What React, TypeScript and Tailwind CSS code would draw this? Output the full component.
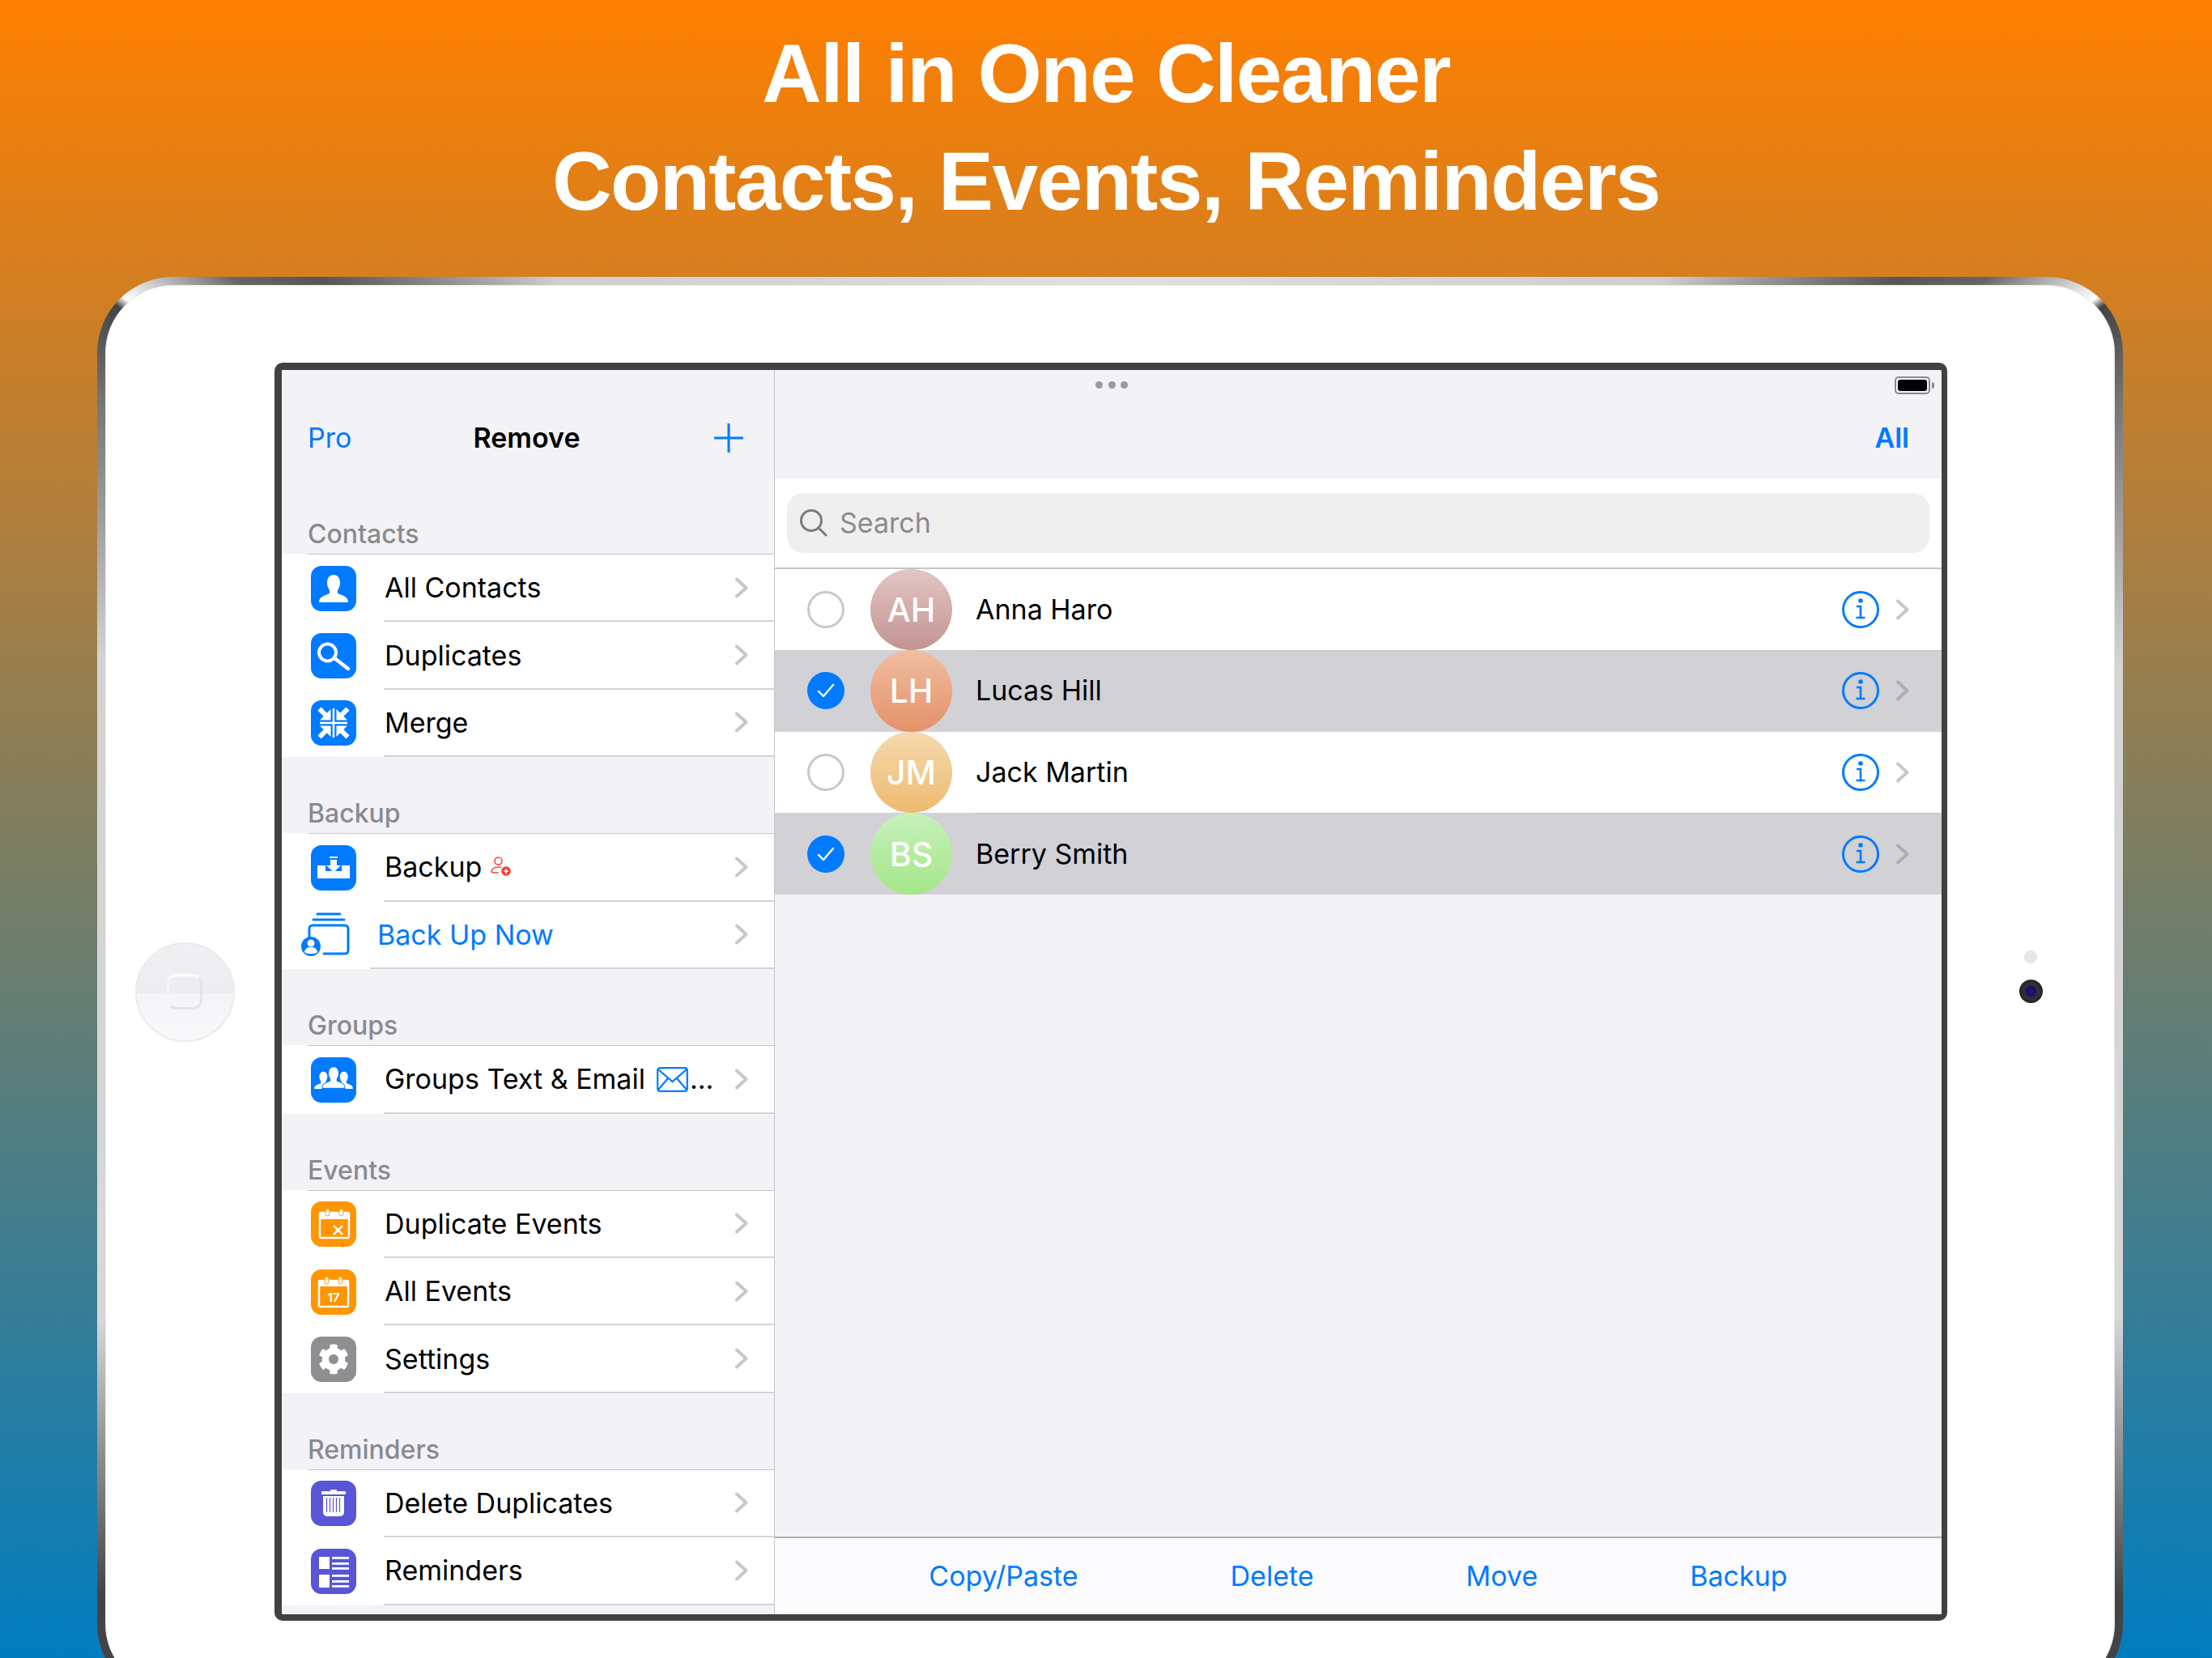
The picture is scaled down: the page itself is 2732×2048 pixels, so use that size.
import { FaCog } from "react-icons/fa";

type RowData = {
  label: string;
  icon: React.ReactNode;
  color?: string;
  extra?: React.ReactNode;
};

const bustPath = "M10 45c0-5 3-7 8-9l5-2v-4c-2-3-3-6-3-9 0-6 3-10 8-10s8 4 8 10c0 3-1 6-3 9v4l5 2c5 2 8 4 8 9z";

function Chevron({ dark }: { dark?: boolean }) {
  return (
    <svg width="16" height="26" viewBox="0 0 16 26" fill="none" className="shrink-0">
      <polyline
        points="2,2.5 13.5,13 2,23.5"
        stroke={dark ? "#aeaeb2" : "#c7c7cc"}
        strokeWidth="4"
        strokeLinecap="round"
        strokeLinejoin="round"
      />
    </svg>
  );
}

function Tile({ bg, children }: { bg: string; children: React.ReactNode }) {
  return (
    <div className={`w-[56px] h-[56px] rounded-[13px] flex items-center justify-center ${bg}`}>
      <svg width="56" height="56" viewBox="0 0 56 56" fill="white">
        {children}
      </svg>
    </div>
  );
}

const PersonIcon = (
  <Tile bg="bg-[#007aff]">
    <path d={bustPath} />
  </Tile>
);

const SearchIcon = (
  <Tile bg="bg-[#007aff]">
    <circle cx="20.5" cy="24" r="10.5" fill="none" stroke="white" strokeWidth="4" />
    <line x1="29" y1="31" x2="46" y2="44" stroke="white" strokeWidth="4.5" strokeLinecap="round" />
  </Tile>
);

const MergeIcon = (
  <Tile bg="bg-[#007aff]">
    <line x1="11" y1="28" x2="45" y2="28" stroke="white" strokeWidth="2.5" />
    <line x1="28" y1="10" x2="28" y2="46" stroke="white" strokeWidth="2.5" />
    <polygon points="24.5,24.5 24.5,11 11,24.5" />
    <polygon points="31.5,24.5 31.5,11 45,24.5" />
    <polygon points="24.5,31.5 24.5,45 11,31.5" />
    <polygon points="31.5,31.5 31.5,45 45,31.5" />
    <line x1="19" y1="19" x2="10.5" y2="10.5" stroke="white" strokeWidth="6" />
    <line x1="37" y1="19" x2="45.5" y2="10.5" stroke="white" strokeWidth="6" />
    <line x1="19" y1="37" x2="10.5" y2="45.5" stroke="white" strokeWidth="6" />
    <line x1="37" y1="37" x2="45.5" y2="45.5" stroke="white" strokeWidth="6" />
  </Tile>
);

const BackupIcon = (
  <Tile bg="bg-[#007aff]">
    <path d="M8 25h10v7h20v-7h10v16H8z" />
    <rect x="23" y="14" width="10" height="2" />
    <rect x="24" y="18" width="8" height="8" />
    <polygon points="19,25 37,25 28,33.5" />
  </Tile>
);

const BackUpNowIcon = (
  <svg width="60" height="56" viewBox="0 0 60 56" fill="none" stroke="#007aff" strokeWidth="3">
    <line x1="20" y1="2" x2="48" y2="2" strokeLinecap="round" />
    <line x1="15" y1="9" x2="53" y2="9" strokeLinecap="round" />
    <path d="M10 36V20a4 4 0 0 1 4-4h40a4 4 0 0 1 4 4v27a4 4 0 0 1-4 4H28" strokeLinecap="round" />
    <circle cx="12" cy="42" r="12" fill="#007aff" stroke="none" />
    <circle cx="12" cy="38" r="4.5" fill="white" stroke="none" />
    <path d="M4 49c1-5 4-6 8-6s7 1 8 6c-2 3-14 3-16 0z" fill="white" stroke="none" />
  </svg>
);

const GroupIcon = (
  <Tile bg="bg-[#007aff]">
    <g transform="translate(-2 11) scale(0.62)">
      <path d={bustPath} />
    </g>
    <g transform="translate(23.4 11) scale(0.62)">
      <path d={bustPath} />
    </g>
    <g transform="translate(7 4) scale(0.75)">
      <path d={bustPath} stroke="#007aff" strokeWidth="3" paintOrder="stroke" />
    </g>
  </Tile>
);

const EventXIcon = (
  <Tile bg="bg-[#ff9500]">
    <rect x="11" y="14" width="36" height="31" fill="none" stroke="white" strokeWidth="2.5" rx="1.5" />
    <rect x="10" y="13" width="38" height="9" rx="2" />
    <rect x="18" y="9" width="5" height="9" rx="2.5" stroke="#ff9500" strokeWidth="1" />
    <rect x="35" y="9" width="5" height="9" rx="2.5" stroke="#ff9500" strokeWidth="1" />
    <path d="M28 30l11 11M39 30L28 41" stroke="white" strokeWidth="2.5" />
  </Tile>
);

const EventIcon = (
  <Tile bg="bg-[#ff9500]">
    <rect x="10" y="14" width="36" height="32" fill="none" stroke="white" strokeWidth="2.5" rx="1.5" />
    <rect x="9" y="13" width="38" height="8" rx="2" />
    <rect x="17" y="9" width="5" height="9" rx="2.5" stroke="#ff9500" strokeWidth="1" />
    <rect x="34" y="9" width="5" height="9" rx="2.5" stroke="#ff9500" strokeWidth="1" />
    <text x="28" y="40" textAnchor="middle" fontSize="15" fontWeight="700" fontFamily="Inter, sans-serif" fill="white">
      17
    </text>
  </Tile>
);

const SettingsIcon = (
  <div className="w-[56px] h-[56px] rounded-[13px] bg-[#8e8e93] flex items-center justify-center">
    <FaCog size={38} color="white" />
  </div>
);

const TrashIcon = (
  <Tile bg="bg-[#5856d6]">
    <rect x="13" y="13" width="30" height="4" rx="1" />
    <rect x="24" y="11" width="8" height="3" rx="1" />
    <path d="M15 19h26v20a5 5 0 0 1-5 5H20a5 5 0 0 1-5-5z" />
    <path d="M19.5 21v18M23.5 21v18M27.5 21v18M31.5 21v18M35.5 21v18" stroke="#5856d6" strokeWidth="1.2" />
  </Tile>
);

const ReminderIcon = (
  <Tile bg="bg-[#5856d6]">
    <rect x="10" y="10" width="13" height="15" />
    <rect x="10" y="32" width="13" height="16" />
    <rect x="26" y="10" width="21" height="2.8" />
    <rect x="26" y="17" width="21" height="2.8" />
    <rect x="26" y="23" width="21" height="2.8" />
    <rect x="26" y="32" width="21" height="2.8" />
    <rect x="26" y="39" width="21" height="2.8" />
    <rect x="26" y="45" width="21" height="2.8" />
  </Tile>
);

const RedPersonAdd = (
  <svg width="25" height="24" viewBox="0 0 25 24" fill="none" stroke="#ff3b30" strokeWidth="1.5" className="ml-[11px] mb-[3px]">
    <circle cx="9.5" cy="5.5" r="4.5" />
    <path d="M1 19c0-4 4-6 8.5-6 1 0 2 .1 3 .4M1 19c1 1 5 1 8 1" strokeLinecap="round" />
    <circle cx="19" cy="18" r="5.8" fill="#ff3b30" stroke="none" />
    <path d="M19 15v6M16 18h6" stroke="white" strokeWidth="1.6" />
  </svg>
);

const MailIcon = (
  <svg width="39" height="31" viewBox="0 0 39 31" fill="none" stroke="#007aff" strokeWidth="2.2" className="ml-[14px]">
    <rect x="1.2" y="1.2" width="36.6" height="28.6" rx="3" />
    <path d="M2 3l17.5 15L37 3M2 28l12-14M37 28L25 14" />
  </svg>
);

const sections: { title: string; headH: string; rows: RowData[] }[] = [
  {
    title: "Contacts",
    headH: "h-[93px]",
    rows: [
      { label: "All Contacts", icon: PersonIcon },
      { label: "Duplicates", icon: SearchIcon },
      { label: "Merge", icon: MergeIcon },
    ],
  },
  {
    title: "Backup",
    headH: "h-[94px]",
    rows: [{ label: "Backup", icon: BackupIcon, extra: RedPersonAdd }],
  },
  {
    title: "Groups",
    headH: "h-[94px]",
    rows: [
      {
        label: "Groups Text & Email",
        icon: GroupIcon,
        extra: (
          <>
            {MailIcon}
            <span className="ml-[2px]">...</span>
          </>
        ),
      },
    ],
  },
  {
    title: "Events",
    headH: "h-[94px]",
    rows: [
      { label: "Duplicate Events", icon: EventXIcon },
      { label: "All Events", icon: EventIcon },
      { label: "Settings", icon: SettingsIcon },
    ],
  },
  {
    title: "Reminders",
    headH: "h-[94px]",
    rows: [
      { label: "Delete Duplicates", icon: TrashIcon },
      { label: "Reminders", icon: ReminderIcon },
    ],
  },
];

const contacts = [
  { initials: "AH", name: "Anna Haro", selected: false, grad: "from-[#e3c6c4] to-[#c29491]" },
  { initials: "LH", name: "Lucas Hill", selected: true, grad: "from-[#f1bea1] to-[#e39168]" },
  { initials: "JM", name: "Jack Martin", selected: false, grad: "from-[#f5d9ae] to-[#eebb6e]" },
  { initials: "BS", name: "Berry Smith", selected: true, grad: "from-[#c8f1ba] to-[#a3e688]" },
];

function SideRow({ row }: { row: RowData }) {
  return (
    <div className="h-[83.4px] flex bg-white">
      <div className="w-[126px] pl-[36px] flex items-center shrink-0">{row.icon}</div>
      <div className="flex-1 flex items-center justify-between pl-[1px] pr-[32px] border-b-2 border-[#d4d4d8]">
        <div className="flex items-center pt-[1px]">
          <span>{row.label}</span>
          {row.extra}
        </div>
        <Chevron />
      </div>
    </div>
  );
}

function BackUpNowRow() {
  return (
    <div className="h-[83.6px] flex bg-white">
      <div className="w-[109px] pl-[24px] flex items-center shrink-0">{BackUpNowIcon}</div>
      <div className="flex-1 flex items-center justify-between pl-[9px] pr-[32px] border-b-2 border-[#d4d4d8] text-[#007aff]">
        <span className="pt-[1px]">Back Up Now</span>
        <Chevron />
      </div>
    </div>
  );
}

function Sidebar() {
  return (
    <aside className="w-[609px] shrink-0 border-r border-[#c6c6c8] flex flex-col">
      <div className="h-[134px] pt-[40px] pb-[6px] pl-[32px] pr-[38px] grid grid-cols-[1fr_auto_1fr] items-center">
        <span className="text-[#007aff]">Pro</span>
        <span className="font-semibold ml-[3px]">Remove</span>
        <svg width="36" height="36" viewBox="0 0 36 36" stroke="#007aff" strokeWidth="3" className="justify-self-end">
          <line x1="18" y1="0" x2="18" y2="36" />
          <line x1="0" y1="18" x2="36" y2="18" />
        </svg>
      </div>
      {sections.map((s) => (
        <section key={s.title}>
          <div className={`${s.headH} flex items-end pl-[32px] pb-[4px]`}>
            <span className="text-[32px] leading-[40px] font-medium text-[#8a8a8e]">{s.title}</span>
          </div>
          <div className="bg-white">
            <div className="h-px ml-[32px] bg-[#c6c6c8]" />
            {s.rows.map((r) => (
              <SideRow key={r.label} row={r} />
            ))}
            {s.title === "Backup" && <BackUpNowRow />}
          </div>
        </section>
      ))}
    </aside>
  );
}

function InfoIcon() {
  return (
    <svg width="46" height="46" viewBox="0 0 46 46" fill="none" stroke="#007aff" strokeWidth="3" className="shrink-0">
      <circle cx="23" cy="23" r="21.5" />
      <circle cx="23" cy="12" r="2.8" fill="#007aff" stroke="none" />
      <path d="M18 19h5v14M17.5 33h11" strokeWidth="2.6" />
    </svg>
  );
}

function ContactRow({ c }: { c: (typeof contacts)[number] }) {
  return (
    <div className={`h-[100.6px] flex items-center pl-[40px] ${c.selected ? "bg-[#d1d1d6]" : "bg-white"}`}>
      {c.selected ? (
        <div className="w-[46px] h-[46px] rounded-full bg-[#007aff] flex items-center justify-center shrink-0">
          <svg width="24" height="20" viewBox="0 0 24 20" fill="none" stroke="white" strokeWidth="2.4">
            <path d="M3 11l6 6L21 3" strokeLinecap="round" strokeLinejoin="round" />
          </svg>
        </div>
      ) : (
        <div className="w-[46px] h-[46px] rounded-full border-[3px] border-[#c7c7cc] shrink-0" />
      )}
      <div
        className={`ml-[32px] w-[101px] h-[100.6px] rounded-full bg-gradient-to-b ${c.grad} flex items-center justify-center shrink-0 text-white text-[41px] font-medium`}
      >
        {c.initials}
      </div>
      <div className={`ml-[28px] flex-1 self-stretch flex items-center pl-[1px] pr-[40px] pb-[2px] border-t-2 ${c.selected ? "border-[#c8c8cc]" : "border-transparent"}`}>
        <span className="flex-1">{c.name}</span>
        <InfoIcon />
        <div className="ml-[21px]">
          <Chevron dark={c.selected} />
        </div>
      </div>
    </div>
  );
}

function MainPane() {
  return (
    <main className="flex-1 flex flex-col">
      <div className="h-[134px] pt-[40px] pb-[6px] pr-[40px] flex items-center justify-end">
        <span className="text-[#007aff] font-semibold">All</span>
      </div>
      <div className="h-[111.5px] px-[15px] pt-[18px] bg-white border-b-2 border-[#c6c6c8]">
        <div className="h-[74px] rounded-[20px] bg-[#efeff0] flex items-center pl-[15px] gap-[14px] text-[#8a8a8e]">
          <svg width="36" height="36" viewBox="0 0 36 36" fill="none" stroke="#7c7c80" strokeWidth="3">
            <circle cx="15" cy="15" r="12.5" />
            <line x1="24" y1="24" x2="33" y2="33" strokeLinecap="round" />
          </svg>
          <span>Search</span>
        </div>
      </div>
      {contacts.map((c) => (
        <ContactRow key={c.name} c={c} />
      ))}
      <div className="mt-auto h-[96px] border-t-2 border-[#b0b0b3] bg-[#fbfbfd] flex items-center justify-center gap-[188px] text-[#007aff]">
        <span>Copy/Paste</span>
        <span>Delete</span>
        <span>Move</span>
        <span>Backup</span>
      </div>
    </main>
  );
}

function Screen() {
  return (
    <div className="relative w-[2066px] h-[1554px] shrink-0 border-t-[9px] border-l-[9px] border-r-[7px] border-b-[8px] border-[#414141] rounded-[10px] bg-[#f2f2f7] flex text-[34px] leading-[44px] text-black font-['Inter',sans-serif]">
      <Sidebar />
      <MainPane />
      <div className="absolute left-1/2 -translate-x-1/2 top-[14px] flex gap-[6.5px]">
        <div className="w-[9px] h-[9px] rounded-full bg-[#9a9a9f]" />
        <div className="w-[9px] h-[9px] rounded-full bg-[#9a9a9f]" />
        <div className="w-[9px] h-[9px] rounded-full bg-[#9a9a9f]" />
      </div>
      <div className="absolute top-[8px] right-[9px] flex items-center">
        <div className="w-[44px] h-[22px] rounded-[5px] border-2 border-[#8a8a8e] p-[2px]">
          <div className="w-full h-full rounded-[3px] bg-black" />
        </div>
        <div className="w-[3px] h-[8px] ml-[2px] rounded-r-full bg-[#8a8a8e]" />
      </div>
    </div>
  );
}

export default function App() {
  return (
    <div className="w-[2732px] h-[2048px] overflow-hidden bg-[linear-gradient(#ff7f00,#007dbf)]">
      <h1 className="h-[342px] pt-[25px] text-center text-white text-[102px] leading-[133px] tracking-[-1.6px] font-bold font-['Liberation_Sans',sans-serif]">
        All in One Cleaner
        <br />
        Contacts, Events, Reminders
      </h1>
      <div className="ml-[120px] w-[2502px] h-[1758px] p-[10px] rounded-[94px] bg-[conic-gradient(#e0e0e0_0deg,#cfcfcf_38deg,#555_48deg,#666_51deg,#fff_55deg,#444_55.5deg,#777_60deg,#d4d4d4_72deg,#d8d8d8_108deg,#777_117deg,#444_121deg,#444_239deg,#777_243deg,#d8d8d8_252deg,#d4d4d4_288deg,#777_300deg,#444_304.5deg,#fff_305deg,#666_309deg,#555_312deg,#cfcfcf_322deg,#e0e0e0_360deg)]">
        <div className="w-full h-full rounded-[84px] bg-white border border-[#e8e8e8] pt-[95px] flex items-start">
          <div className="w-[208px] h-[1554px] pr-[14px] flex items-center justify-center shrink-0">
            <div className="w-[123px] h-[123px] rounded-full border-2 border-[#ebebee] bg-[linear-gradient(#f0f0f3_0%,#ecedf0_51%,#f4f4f7_51%,#f9f9fb_100%)] flex items-center justify-center">
              <div className="w-[44px] h-[44px] rounded-[12px] border-[3px] border-[#e4e4e8] border-t-white border-l-[#f6f6f8]" />
            </div>
          </div>
          <Screen />
          <div className="flex-1 h-[1554px] pb-[37px] flex flex-col items-center justify-center gap-[20px]">
            <div className="w-[16px] h-[16px] rounded-full bg-[#e6e6e8]" />
            <div className="w-[29px] h-[29px] rounded-full bg-[radial-gradient(circle,#1a1a8a_0%,#10106a_25%,#333_42%,#111_100%)]" />
          </div>
        </div>
      </div>
    </div>
  );
}
